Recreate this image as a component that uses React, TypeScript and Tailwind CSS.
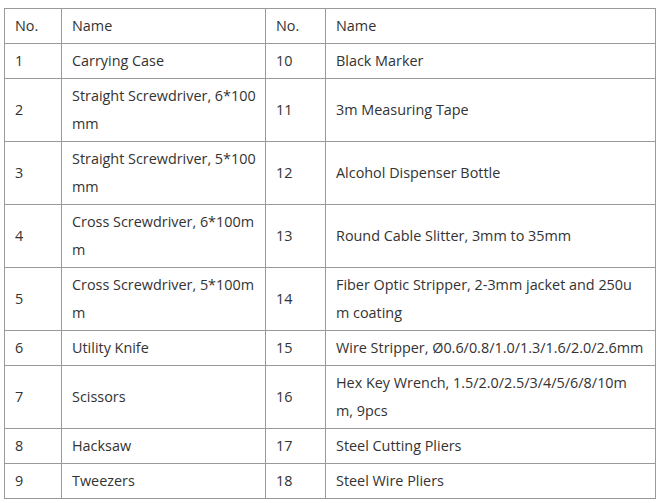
const rows: [string, string, string, string][] = [
  ["1", "Carrying Case", "10", "Black Marker"],
  ["2", "Straight Screwdriver, 6*100mm", "11", "3m Measuring Tape"],
  ["3", "Straight Screwdriver, 5*100mm", "12", "Alcohol Dispenser Bottle"],
  ["4", "Cross Screwdriver, 6*100mm", "13", "Round Cable Slitter, 3mm to 35mm"],
  ["5", "Cross Screwdriver, 5*100mm", "14", "Fiber Optic Stripper, 2-3mm jacket and 250um coating"],
  ["6", "Utility Knife", "15", "Wire Stripper, Ø0.6/0.8/1.0/1.3/1.6/2.0/2.6mm"],
  ["7", "Scissors", "16", "Hex Key Wrench, 1.5/2.0/2.5/3/4/5/6/8/10m\nm, 9pcs"],
  ["8", "Hacksaw", "17", "Steel Cutting Pliers"],
  ["9", "Tweezers", "18", "Steel Wire Pliers"],
];

const cell = "border border-[#999] pl-[10px] py-[3px] align-middle leading-[28px] break-all whitespace-pre-line text-left font-normal";
const pads = ["pr-[10px]", "pr-[6px]", "pr-[10px]", "pr-[10px]"];

export default function App() {
  return (
    <div className="pt-[8px] pl-[4px] bg-white min-h-screen text-[14.4px] text-[#333] font-['Open_Sans',sans-serif]">
      <table className="table-fixed border-collapse w-[651px]">
        <colgroup>
          <col className="w-[57px]" />
          <col className="w-[204px]" />
          <col className="w-[60px]" />
          <col className="w-[330px]" />
        </colgroup>
        <thead>
          <tr>
            {["No.", "Name", "No.", "Name"].map((h, i) => (
              <th key={i} className={`${cell} ${pads[i]}`}>{h}</th>
            ))}
          </tr>
        </thead>
        <tbody>
          {rows.map((r) => (
            <tr key={r[0]}>
              {r.map((c, i) => (
                <td key={i} className={`${cell} ${pads[i]}`}>{c}</td>
              ))}
            </tr>
          ))}
        </tbody>
      </table>
    </div>
  );
}
